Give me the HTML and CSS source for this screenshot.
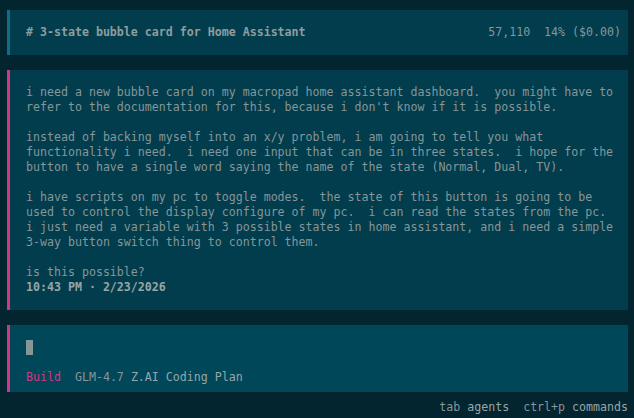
FILE: index.html
```html
<!DOCTYPE html>
<html>
<head>
<meta charset="utf-8">
<link rel="stylesheet" href="styles.css">
</head>
<body>
<div class="app">
  <div class="title-box">
    <span class="title"># 3-state bubble card for Home Assistant</span>
    <span class="stats">57,110  14% ($0.00)</span>
  </div>
  <div class="message">
<div class="line">i need a new bubble card on my macropad home assistant dashboard.  you might have to</div>
<div class="line">refer to the documentation for this, because i don't know if it is possible.</div>
<div class="line"> </div>
<div class="line">instead of backing myself into an x/y problem, i am going to tell you what</div>
<div class="line">functionality i need.  i need one input that can be in three states.  i hope for the</div>
<div class="line">button to have a single word saying the name of the state (Normal, Dual, TV).</div>
<div class="line"> </div>
<div class="line">i have scripts on my pc to toggle modes.  the state of this button is going to be</div>
<div class="line">used to control the display configure of my pc.  i can read the states from the pc.</div>
<div class="line">i just need a variable with 3 possible states in home assistant, and i need a simple</div>
<div class="line">3-way button switch thing to control them.</div>
<div class="line"> </div>
<div class="line">is this possible?</div>
<div class="line stamp">10:43 PM · 2/23/2026</div>
  </div>
  <div class="input-box">
    <div class="line"><span class="cursor"></span></div>
    <div class="line"> </div>
    <div class="line"><span class="mode">Build</span>  <span class="model">GLM-4.7</span> <span class="provider">Z.AI Coding Plan</span></div>
  </div>
  <div class="footer"><span class="key">tab</span> <span class="label">agents</span>  <span class="key">ctrl+p</span> <span class="label">commands</span></div>
</div>
</body>
</html>
```
FILE: styles.css
```css
html, body {
  margin: 0;
  padding: 0;
  background: #022530;
  height: 100%;
}
body {
  font-family: "DejaVu Sans Mono", "Liberation Mono", monospace;
  font-size: 11.62px;
  line-height: 15px;
  color: #869699;
}
.app {
  padding: 10px 6px 0 7px;
}
.title-box {
  display: flex;
  justify-content: space-between;
  background: #013d4d;
  border-left: 3px solid #0f6d8c;
  padding: 15px 7px 15px 16px;
  white-space: pre;
}
.title {
  font-weight: bold;
  color: #8e9d9f;
}
.stats {
  color: #869699;
}
.message {
  margin-top: 15px;
  background: #013d4d;
  border-left: 3px solid #d33682;
  padding: 15px 14px 15px 16px;
}
.line {
  white-space: pre;
  height: 15px;
}
.stamp {
  font-weight: bold;
  color: #98a6a7;
}
.input-box {
  margin-top: 15px;
  background: #00475a;
  border-left: 3px solid #d33682;
  padding: 15px 16px 7px 16px;
}
.cursor {
  display: inline-block;
  width: 7px;
  height: 15px;
  background: #869699;
  vertical-align: top;
}
.mode {
  color: #d33682;
}
.model {
  color: #869699;
}
.provider {
  color: #98a6a7;
}
.footer {
  margin-top: 8px;
  text-align: right;
  white-space: pre;
}
.key {
  color: #869699;
}
.label {
  color: #98a6a7;
}
```
